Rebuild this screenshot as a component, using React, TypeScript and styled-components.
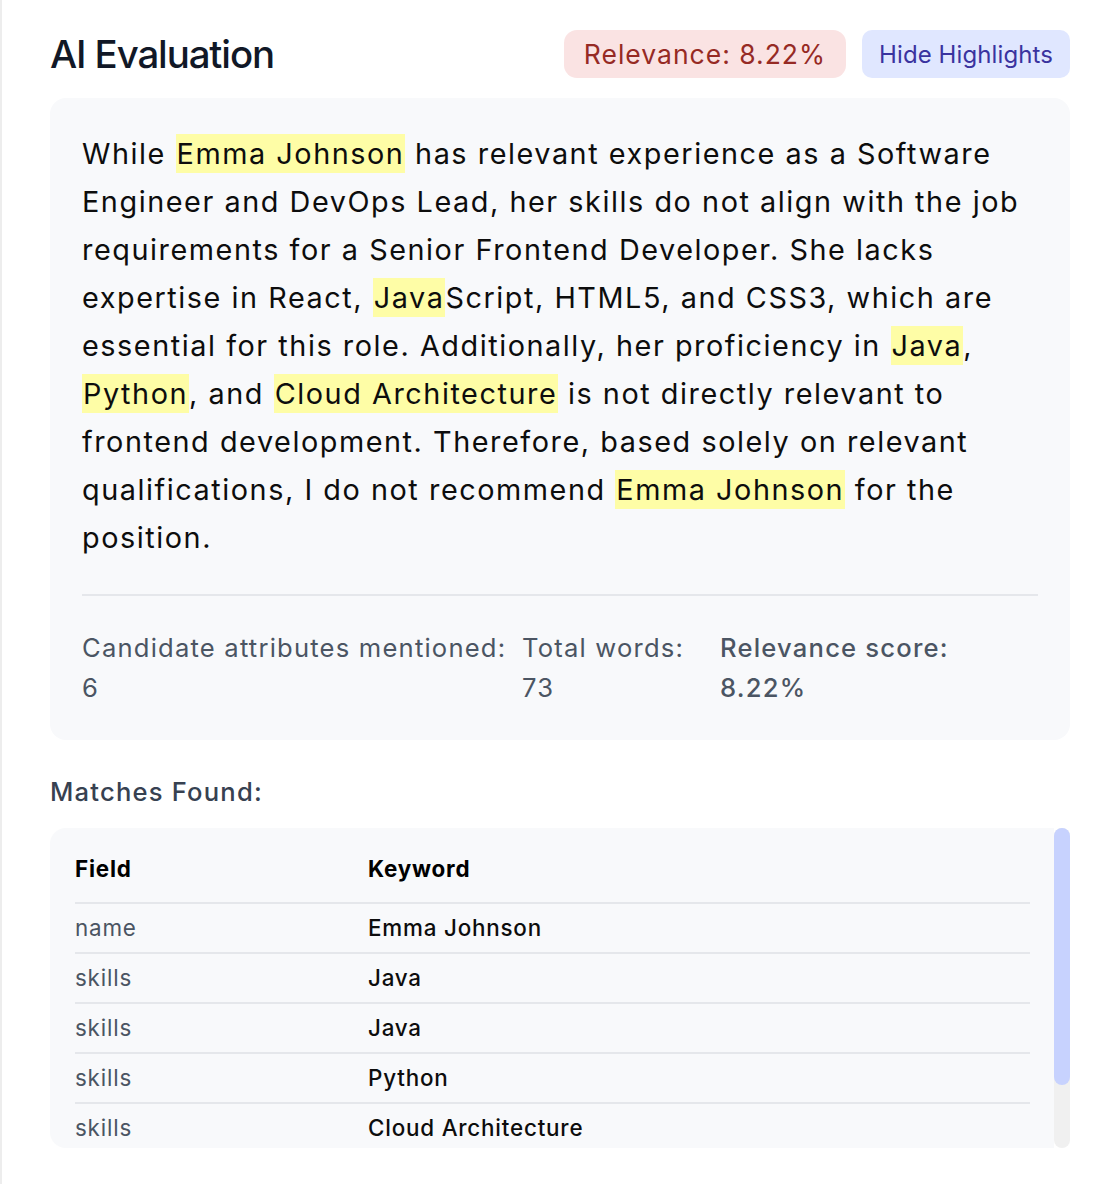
import React from "react";
import styled, { createGlobalStyle } from "styled-components";

const GlobalStyle = createGlobalStyle`
  html, body { margin: 0; padding: 0; background: #ffffff; }
  body { font-family: Inter, "Noto Sans", "Liberation Sans", sans-serif; }
  * { box-sizing: border-box; }
`;

const Page = styled.div`
  min-height: 1184px;
  border-left: 2px solid #ededed;
  padding: 30px 28px 0 48px;
  font-family: Inter, "Noto Sans", "Liberation Sans", sans-serif;
`;

const Header = styled.div`
  display: flex;
  align-items: center;
  justify-content: space-between;
  height: 48px;
  margin-bottom: 20px;
`;

const Title = styled.h2`
  margin: 0;
  font-size: 38.4px;
  font-weight: 500;
  color: #111827;
  letter-spacing: -1.1px;
`;

const Actions = styled.div`
  display: flex;
  align-items: center;
  gap: 16px;
`;

const Pill = styled.div<{ $tone: "red" | "indigo" }>`
  display: flex;
  align-items: center;
  height: 48px;
  padding: 0 ${(p) => (p.$tone === "red" ? "20px" : "17px")};
  border-radius: ${(p) => (p.$tone === "red" ? "13px" : "10px")};
  font-size: ${(p) => (p.$tone === "red" ? "26.5px" : "24px")};
  letter-spacing: ${(p) => (p.$tone === "red" ? "1px" : "0.1px")};
  font-weight: 400;
  background: ${(p) => (p.$tone === "red" ? "#fae3e3" : "#e0e7ff")};
  color: ${(p) => (p.$tone === "red" ? "#962a24" : "#3a339f")};
  white-space: nowrap;
`;

const Card = styled.div`
  background: #f8f9fb;
  border-radius: 16px;
  padding: 32px;
`;

const Paragraph = styled.p`
  margin: 0;
  font-size: 28.8px;
  line-height: 48px;
  letter-spacing: 1.55px;
  color: #0d0d0d;
`;

const Mark = styled.mark`
  background: #fefda6;
  color: inherit;
  padding: 2px 1px;
`;

const Divider = styled.hr`
  border: none;
  border-top: 2px solid #e5e7eb;
  margin: 32px 0;
`;

const Stats = styled.div`
  display: grid;
  grid-template-columns: 424px 182px 1fr;
  column-gap: 16px;
`;

const Stat = styled.div<{ $strong?: boolean }>`
  font-size: 25.6px;
  line-height: 40px;
  letter-spacing: 1.2px;
  white-space: nowrap;
  color: #4b5563;
  font-weight: ${(p) => (p.$strong ? 500 : 400)};
`;

const StatLabel = styled.div``;
const StatValue = styled.div``;

const SectionLabel = styled.div`
  margin-top: 36px;
  margin-bottom: 20px;
  font-size: 25.6px;
  line-height: 32px;
  letter-spacing: 1.2px;
  font-weight: 500;
  color: #374151;
`;

const TableBox = styled.div`
  display: flex;
  height: 320px;
`;

const ScrollArea = styled.div`
  flex: 1;
  overflow-y: auto;
  background: #f8f9fb;
  border-radius: 16px 0 0 16px;
  padding: 16px 24px 16px 25px;
  scrollbar-width: none;
  &::-webkit-scrollbar { display: none; }
`;

const ScrollTrack = styled.div`
  width: 16px;
  flex-shrink: 0;
  display: flex;
  flex-direction: column;
  background: #f0f0f0;
  border-radius: 8px;
`;

const ScrollThumb = styled.div`
  height: 257px;
  background: #c7d2fe;
  border-radius: 8px;
`;

const Table = styled.table`
  width: 100%;
  border-collapse: collapse;
  font-size: 22.4px;
  line-height: 22.4px;
  letter-spacing: 0.8px;
`;

const Th = styled.th<{ $w?: string }>`
  text-align: left;
  font-weight: 700;
  color: #000;
  padding: 14px 0 21.6px;
  border-bottom: 2px solid #e5e7eb;
  width: ${(p) => p.$w || "auto"};
`;

const Tr = styled.tr`
  border-bottom: 2px solid #e5e7eb;
  &:last-child { border-bottom: none; }
`;

const Td = styled.td<{ $muted?: boolean }>`
  padding: 12.8px 0;
  color: ${(p) => (p.$muted ? "#4b5563" : "#0d0d0d")};
  font-weight: ${(p) => (p.$muted ? 400 : 500)};
`;

const matches = [
  { field: "name", keyword: "Emma Johnson" },
  { field: "skills", keyword: "Java" },
  { field: "skills", keyword: "Java" },
  { field: "skills", keyword: "Python" },
  { field: "skills", keyword: "Cloud Architecture" },
  { field: "name", keyword: "Emma Johnson" },
];

export default function App() {
  return (
    <>
      <GlobalStyle />
      <Page>
        <Header>
          <Title>AI Evaluation</Title>
          <Actions>
            <Pill $tone="red">Relevance: 8.22%</Pill>
            <Pill $tone="indigo">Hide Highlights</Pill>
          </Actions>
        </Header>
        <Card>
          <Paragraph>
            While <Mark>Emma Johnson</Mark> has relevant experience as a Software
            Engineer and DevOps Lead, her skills do not align with the job
            requirements for a Senior Frontend Developer. She lacks expertise in
            React, <Mark>Java</Mark>Script, HTML5, and CSS3, which are essential
            for this role. Additionally, her proficiency in <Mark>Java</Mark>,{" "}
            <Mark>Python</Mark>, and <Mark>Cloud Architecture</Mark> is not
            directly relevant to frontend development. Therefore, based solely on
            relevant qualifications, I do not recommend <Mark>Emma Johnson</Mark>{" "}
            for the position.
          </Paragraph>
          <Divider />
          <Stats>
            <Stat>
              <StatLabel>Candidate attributes mentioned:</StatLabel>
              <StatValue>6</StatValue>
            </Stat>
            <Stat>
              <StatLabel>Total words:</StatLabel>
              <StatValue>73</StatValue>
            </Stat>
            <Stat $strong>
              <StatLabel>Relevance score:</StatLabel>
              <StatValue>8.22%</StatValue>
            </Stat>
          </Stats>
        </Card>
        <SectionLabel>Matches Found:</SectionLabel>
        <TableBox>
          <ScrollArea>
            <Table>
              <thead>
                <tr>
                  <Th $w="293px">Field</Th>
                  <Th>Keyword</Th>
                </tr>
              </thead>
              <tbody>
                {matches.map((m, i) => (
                  <Tr key={i}>
                    <Td $muted>{m.field}</Td>
                    <Td>{m.keyword}</Td>
                  </Tr>
                ))}
              </tbody>
            </Table>
          </ScrollArea>
          <ScrollTrack>
            <ScrollThumb />
          </ScrollTrack>
        </TableBox>
      </Page>
    </>
  );
}
